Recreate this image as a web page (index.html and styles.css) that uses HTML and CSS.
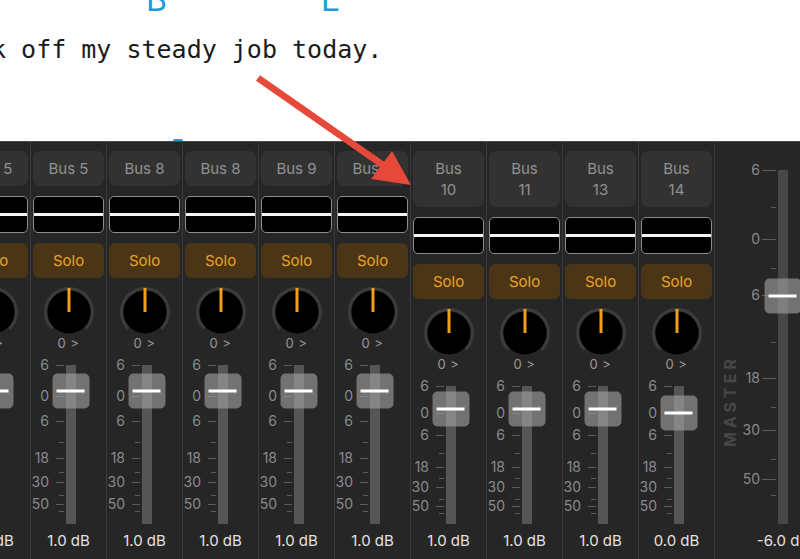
FILE: index.html
```html
<!DOCTYPE html>
<html lang="en">
<head>
    <meta charset="UTF-8">
    <meta name="viewport" content="width=device-width, initial-scale=1.0">
    <title>Bus Mixer</title>
    <link rel="stylesheet" href="styles.css">
</head>
<body>
    <div class="doc">
        <div class="letters"><span class="cap-b">B</span><span class="cap-e">E</span></div>
        <p class="quote">k off my steady job today.</p>
        <span class="mark"></span>
    </div>

    <div class="mixer">
        <div class="strip">
            <div class="name">Bus 5</div>
            <div class="meter"></div>
            <div class="solo">Solo</div>
            <svg class="knob" viewBox="0 0 50 50"><path class="ring" d="M8.4 41.6 A23.5 23.5 0 1 1 41.6 41.6"/><circle cx="25" cy="25" r="21.5"/><line x1="25" y1="1" x2="25" y2="25"/></svg>
            <div class="pan">0 &gt;</div>
            <div class="fader">
                <div class="rail">
                    <span class="mk m1"><i>6</i></span><span class="mk m2"><i>0</i></span><span class="mk m3"><i>6</i></span>
                    <span class="mk m4"><i>18</i></span><span class="mk m5"><i>30</i></span><span class="mk m6"><i>50</i></span>
                    <span class="mn n1"></span><span class="mn n2"></span><span class="mn n3"></span><span class="mn n4"></span>
                    <div class="cap" style="top: 16.6%"></div>
                </div>
            </div>
            <div class="db">1.0 dB</div>
        </div>

        <div class="strip">
            <div class="name">Bus 5</div>
            <div class="meter"></div>
            <div class="solo">Solo</div>
            <svg class="knob" viewBox="0 0 50 50"><path class="ring" d="M8.4 41.6 A23.5 23.5 0 1 1 41.6 41.6"/><circle cx="25" cy="25" r="21.5"/><line x1="25" y1="1" x2="25" y2="25"/></svg>
            <div class="pan">0 &gt;</div>
            <div class="fader">
                <div class="rail">
                    <span class="mk m1"><i>6</i></span><span class="mk m2"><i>0</i></span><span class="mk m3"><i>6</i></span>
                    <span class="mk m4"><i>18</i></span><span class="mk m5"><i>30</i></span><span class="mk m6"><i>50</i></span>
                    <span class="mn n1"></span><span class="mn n2"></span><span class="mn n3"></span><span class="mn n4"></span>
                    <div class="cap" style="top: 16.6%"></div>
                </div>
            </div>
            <div class="db">1.0 dB</div>
        </div>

        <div class="strip">
            <div class="name">Bus 8</div>
            <div class="meter"></div>
            <div class="solo">Solo</div>
            <svg class="knob" viewBox="0 0 50 50"><path class="ring" d="M8.4 41.6 A23.5 23.5 0 1 1 41.6 41.6"/><circle cx="25" cy="25" r="21.5"/><line x1="25" y1="1" x2="25" y2="25"/></svg>
            <div class="pan">0 &gt;</div>
            <div class="fader">
                <div class="rail">
                    <span class="mk m1"><i>6</i></span><span class="mk m2"><i>0</i></span><span class="mk m3"><i>6</i></span>
                    <span class="mk m4"><i>18</i></span><span class="mk m5"><i>30</i></span><span class="mk m6"><i>50</i></span>
                    <span class="mn n1"></span><span class="mn n2"></span><span class="mn n3"></span><span class="mn n4"></span>
                    <div class="cap" style="top: 16.6%"></div>
                </div>
            </div>
            <div class="db">1.0 dB</div>
        </div>

        <div class="strip">
            <div class="name">Bus 8</div>
            <div class="meter"></div>
            <div class="solo">Solo</div>
            <svg class="knob" viewBox="0 0 50 50"><path class="ring" d="M8.4 41.6 A23.5 23.5 0 1 1 41.6 41.6"/><circle cx="25" cy="25" r="21.5"/><line x1="25" y1="1" x2="25" y2="25"/></svg>
            <div class="pan">0 &gt;</div>
            <div class="fader">
                <div class="rail">
                    <span class="mk m1"><i>6</i></span><span class="mk m2"><i>0</i></span><span class="mk m3"><i>6</i></span>
                    <span class="mk m4"><i>18</i></span><span class="mk m5"><i>30</i></span><span class="mk m6"><i>50</i></span>
                    <span class="mn n1"></span><span class="mn n2"></span><span class="mn n3"></span><span class="mn n4"></span>
                    <div class="cap" style="top: 16.6%"></div>
                </div>
            </div>
            <div class="db">1.0 dB</div>
        </div>

        <div class="strip">
            <div class="name">Bus 9</div>
            <div class="meter"></div>
            <div class="solo">Solo</div>
            <svg class="knob" viewBox="0 0 50 50"><path class="ring" d="M8.4 41.6 A23.5 23.5 0 1 1 41.6 41.6"/><circle cx="25" cy="25" r="21.5"/><line x1="25" y1="1" x2="25" y2="25"/></svg>
            <div class="pan">0 &gt;</div>
            <div class="fader">
                <div class="rail">
                    <span class="mk m1"><i>6</i></span><span class="mk m2"><i>0</i></span><span class="mk m3"><i>6</i></span>
                    <span class="mk m4"><i>18</i></span><span class="mk m5"><i>30</i></span><span class="mk m6"><i>50</i></span>
                    <span class="mn n1"></span><span class="mn n2"></span><span class="mn n3"></span><span class="mn n4"></span>
                    <div class="cap" style="top: 16.6%"></div>
                </div>
            </div>
            <div class="db">1.0 dB</div>
        </div>

        <div class="strip">
            <div class="name">Bus 9</div>
            <div class="meter"></div>
            <div class="solo">Solo</div>
            <svg class="knob" viewBox="0 0 50 50"><path class="ring" d="M8.4 41.6 A23.5 23.5 0 1 1 41.6 41.6"/><circle cx="25" cy="25" r="21.5"/><line x1="25" y1="1" x2="25" y2="25"/></svg>
            <div class="pan">0 &gt;</div>
            <div class="fader">
                <div class="rail">
                    <span class="mk m1"><i>6</i></span><span class="mk m2"><i>0</i></span><span class="mk m3"><i>6</i></span>
                    <span class="mk m4"><i>18</i></span><span class="mk m5"><i>30</i></span><span class="mk m6"><i>50</i></span>
                    <span class="mn n1"></span><span class="mn n2"></span><span class="mn n3"></span><span class="mn n4"></span>
                    <div class="cap" style="top: 16.6%"></div>
                </div>
            </div>
            <div class="db">1.0 dB</div>
        </div>

        <div class="strip">
            <div class="name">Bus<br>10</div>
            <div class="meter"></div>
            <div class="solo">Solo</div>
            <svg class="knob" viewBox="0 0 50 50"><path class="ring" d="M8.4 41.6 A23.5 23.5 0 1 1 41.6 41.6"/><circle cx="25" cy="25" r="21.5"/><line x1="25" y1="1" x2="25" y2="25"/></svg>
            <div class="pan">0 &gt;</div>
            <div class="fader">
                <div class="rail">
                    <span class="mk m1"><i>6</i></span><span class="mk m2"><i>0</i></span><span class="mk m3"><i>6</i></span>
                    <span class="mk m4"><i>18</i></span><span class="mk m5"><i>30</i></span><span class="mk m6"><i>50</i></span>
                    <span class="mn n1"></span><span class="mn n2"></span><span class="mn n3"></span><span class="mn n4"></span>
                    <div class="cap" style="top: 16.6%"></div>
                </div>
            </div>
            <div class="db">1.0 dB</div>
        </div>

        <div class="strip">
            <div class="name">Bus<br>11</div>
            <div class="meter"></div>
            <div class="solo">Solo</div>
            <svg class="knob" viewBox="0 0 50 50"><path class="ring" d="M8.4 41.6 A23.5 23.5 0 1 1 41.6 41.6"/><circle cx="25" cy="25" r="21.5"/><line x1="25" y1="1" x2="25" y2="25"/></svg>
            <div class="pan">0 &gt;</div>
            <div class="fader">
                <div class="rail">
                    <span class="mk m1"><i>6</i></span><span class="mk m2"><i>0</i></span><span class="mk m3"><i>6</i></span>
                    <span class="mk m4"><i>18</i></span><span class="mk m5"><i>30</i></span><span class="mk m6"><i>50</i></span>
                    <span class="mn n1"></span><span class="mn n2"></span><span class="mn n3"></span><span class="mn n4"></span>
                    <div class="cap" style="top: 16.6%"></div>
                </div>
            </div>
            <div class="db">1.0 dB</div>
        </div>

        <div class="strip">
            <div class="name">Bus<br>13</div>
            <div class="meter"></div>
            <div class="solo">Solo</div>
            <svg class="knob" viewBox="0 0 50 50"><path class="ring" d="M8.4 41.6 A23.5 23.5 0 1 1 41.6 41.6"/><circle cx="25" cy="25" r="21.5"/><line x1="25" y1="1" x2="25" y2="25"/></svg>
            <div class="pan">0 &gt;</div>
            <div class="fader">
                <div class="rail">
                    <span class="mk m1"><i>6</i></span><span class="mk m2"><i>0</i></span><span class="mk m3"><i>6</i></span>
                    <span class="mk m4"><i>18</i></span><span class="mk m5"><i>30</i></span><span class="mk m6"><i>50</i></span>
                    <span class="mn n1"></span><span class="mn n2"></span><span class="mn n3"></span><span class="mn n4"></span>
                    <div class="cap" style="top: 16.6%"></div>
                </div>
            </div>
            <div class="db">1.0 dB</div>
        </div>

        <div class="strip">
            <div class="name">Bus<br>14</div>
            <div class="meter"></div>
            <div class="solo">Solo</div>
            <svg class="knob" viewBox="0 0 50 50"><path class="ring" d="M8.4 41.6 A23.5 23.5 0 1 1 41.6 41.6"/><circle cx="25" cy="25" r="21.5"/><line x1="25" y1="1" x2="25" y2="25"/></svg>
            <div class="pan">0 &gt;</div>
            <div class="fader">
                <div class="rail">
                    <span class="mk m1"><i>6</i></span><span class="mk m2"><i>0</i></span><span class="mk m3"><i>6</i></span>
                    <span class="mk m4"><i>18</i></span><span class="mk m5"><i>30</i></span><span class="mk m6"><i>50</i></span>
                    <span class="mn n1"></span><span class="mn n2"></span><span class="mn n3"></span><span class="mn n4"></span>
                    <div class="cap" style="top: 19.4%"></div>
                </div>
            </div>
            <div class="db">0.0 dB</div>
        </div>

        <div class="master">
            <div class="master-label">MASTER</div>
            <div class="master-col">
                <div class="fader">
                    <div class="rail">
                        <span class="mk m1"><i>6</i></span><span class="mk m2"><i>0</i></span><span class="mk m3"><i>6</i></span>
                        <span class="mk m4"><i>18</i></span><span class="mk m5"><i>30</i></span><span class="mk m6"><i>50</i></span>
                        <span class="mn n0"></span><span class="mn n5"></span>
                        <span class="mn n1"></span><span class="mn n2"></span><span class="mn n3"></span><span class="mn n4"></span>
                        <div class="cap" style="top: 35.6%"></div>
                    </div>
                </div>
                <div class="db">-6.0 dB</div>
            </div>
        </div>
    </div>

    <!-- annotation arrow drawn over the screenshot -->
    <svg class="arrow" viewBox="0 0 800 559">
        <line x1="258" y1="78" x2="390" y2="170"/>
        <polygon points="411,185 392,151 371,179"/>
    </svg>
</body>
</html>
```

FILE: styles.css
```css
body {
    margin: 0;
    width: 800px;
    height: 559px;
    overflow: hidden;
    position: relative;
    background-color: #fff;
    font-family: Inter, "Noto Sans", sans-serif;
}

/* white page above the mixer */
.doc {
    height: 141px;
    overflow: hidden;
    display: flex;
    flex-direction: column;
}
.letters {
    height: 12px;
    display: flex;
    align-items: flex-end;
    padding-left: 146px;
    color: #1c9bd7;
    font-size: 32px;
}
.letters span {
    line-height: 1;
    margin-bottom: -4px;
}
.cap-e {
    margin-left: 154px;
}
.quote {
    margin: 23px 0 0 -9px;
    font-family: "DejaVu Sans Mono", "Liberation Mono", monospace;
    font-size: 25px;
    line-height: 30px;
    color: #1b1b1b;
    white-space: nowrap;
}
.mark {
    margin-top: auto;
    margin-left: 173px;
    width: 10px;
    height: 2px;
    border-radius: 2px 2px 0 0;
    background-color: #1c9bd7;
}

/* mixer */
.mixer {
    display: flex;
    height: 418px;
    margin-left: -46px;
    background-color: #262626;
    border-top: 1px solid #4b4b4b;
    box-sizing: border-box;
}
.strip {
    flex: none;
    width: 76px;
    box-sizing: border-box;
    border-left: 1px solid #3a3a3a;
    padding: 9px 2px 9px 2px;
    display: flex;
    flex-direction: column;
    align-items: stretch;
}
.name {
    background-color: #323232;
    border-radius: 7px;
    padding: 7px 0;
    line-height: 21px;
    font-size: 15px;
    color: #919191;
    text-align: center;
}
.meter {
    margin-top: 10px;
    height: 37px;
    box-sizing: border-box;
    border: 1px solid #8c8c8c;
    border-radius: 5px;
    background: linear-gradient(#000 0 calc(50% - 1.5px), #f4f4f4 0 calc(50% + 1.5px), #000 0);
}
.solo {
    margin-top: 10px;
    height: 35px;
    line-height: 35px;
    border-radius: 6px;
    background-color: #4a3616;
    color: #eaa125;
    font-size: 15px;
    text-align: center;
}
.knob {
    margin: 9px auto 0;
    width: 50px;
    height: 50px;
    display: block;
}
.knob .ring {
    fill: none;
    stroke: #3c3c3c;
    stroke-width: 3;
}
.knob circle {
    fill: #000;
}
.knob line {
    stroke: #f29e1a;
    stroke-width: 3;
}
.pan {
    margin-top: -1px;
    height: 14px;
    line-height: 14px;
    font-size: 13px;
    color: #999;
    text-align: center;
    letter-spacing: 0.5px;
}
.fader {
    flex: 1;
    display: flex;
    padding: 15px 0 8px 33px;
}
.rail {
    position: relative;
    width: 10px;
    background-color: #555;
}
.mk, .mn {
    position: absolute;
    right: calc(100% + 2px);
    height: 1px;
    background-color: #5c5c5c;
}
.mk {
    width: 8px;
}
.mn {
    width: 5px;
}
.mk i {
    position: absolute;
    right: 15px;
    top: -8px;
    line-height: 16px;
    font-style: normal;
    font-size: 14px;
    color: #8a8a8a;
}
.m1 { top: 0; }
.m2 { top: 19.6%; }
.m3 { top: 35.4%; }
.m4 { top: 58.8%; }
.m5 { top: 73.4%; }
.m6 { top: 87.2%; }
.n0 { top: 10.5%; }
.n5 { top: 27.7%; }
.n1 { top: 48.7%; }
.n2 { top: 67%; }
.n3 { top: 81.6%; }
.n4 { top: 91.8%; }
.cap {
    position: absolute;
    left: 50%;
    width: 37px;
    height: 35px;
    transform: translate(-50%, -50%);
    border-radius: 5px;
    background-color: rgba(165, 165, 165, 0.6);
}
.cap::after {
    content: "";
    position: absolute;
    left: 4px;
    right: 5px;
    top: 16px;
    height: 3px;
    background-color: #fff;
}
.db {
    height: 18px;
    line-height: 18px;
    font-size: 15px;
    color: #e2e2e2;
    text-align: center;
    white-space: nowrap;
}

/* master section */
.master {
    flex: none;
    width: 130px;
    display: flex;
    border-left: 1px solid #3a3a3a;
}
.master-label {
    width: 30px;
    align-self: flex-end;
    margin-bottom: 112px;
    writing-mode: vertical-rl;
    transform: rotate(180deg);
    display: flex;
    align-items: center;
    font-size: 16px;
    font-weight: 700;
    letter-spacing: 4px;
    color: #474747;
}
.master-col {
    width: 76px;
    display: flex;
    flex-direction: column;
    padding: 28px 0 9px;
    box-sizing: border-box;
}
.master .fader {
    padding-top: 0;
}
.master .rail {
    background-color: #474747;
}
.master .mk {
    width: 14px;
}
.master .mk i {
    right: 16px;
}

.arrow {
    position: absolute;
    left: 0;
    top: 0;
    width: 800px;
    height: 559px;
    pointer-events: none;
}
.arrow line {
    stroke: #e6483a;
    stroke-width: 7;
}
.arrow polygon {
    fill: #e6483a;
}
```
